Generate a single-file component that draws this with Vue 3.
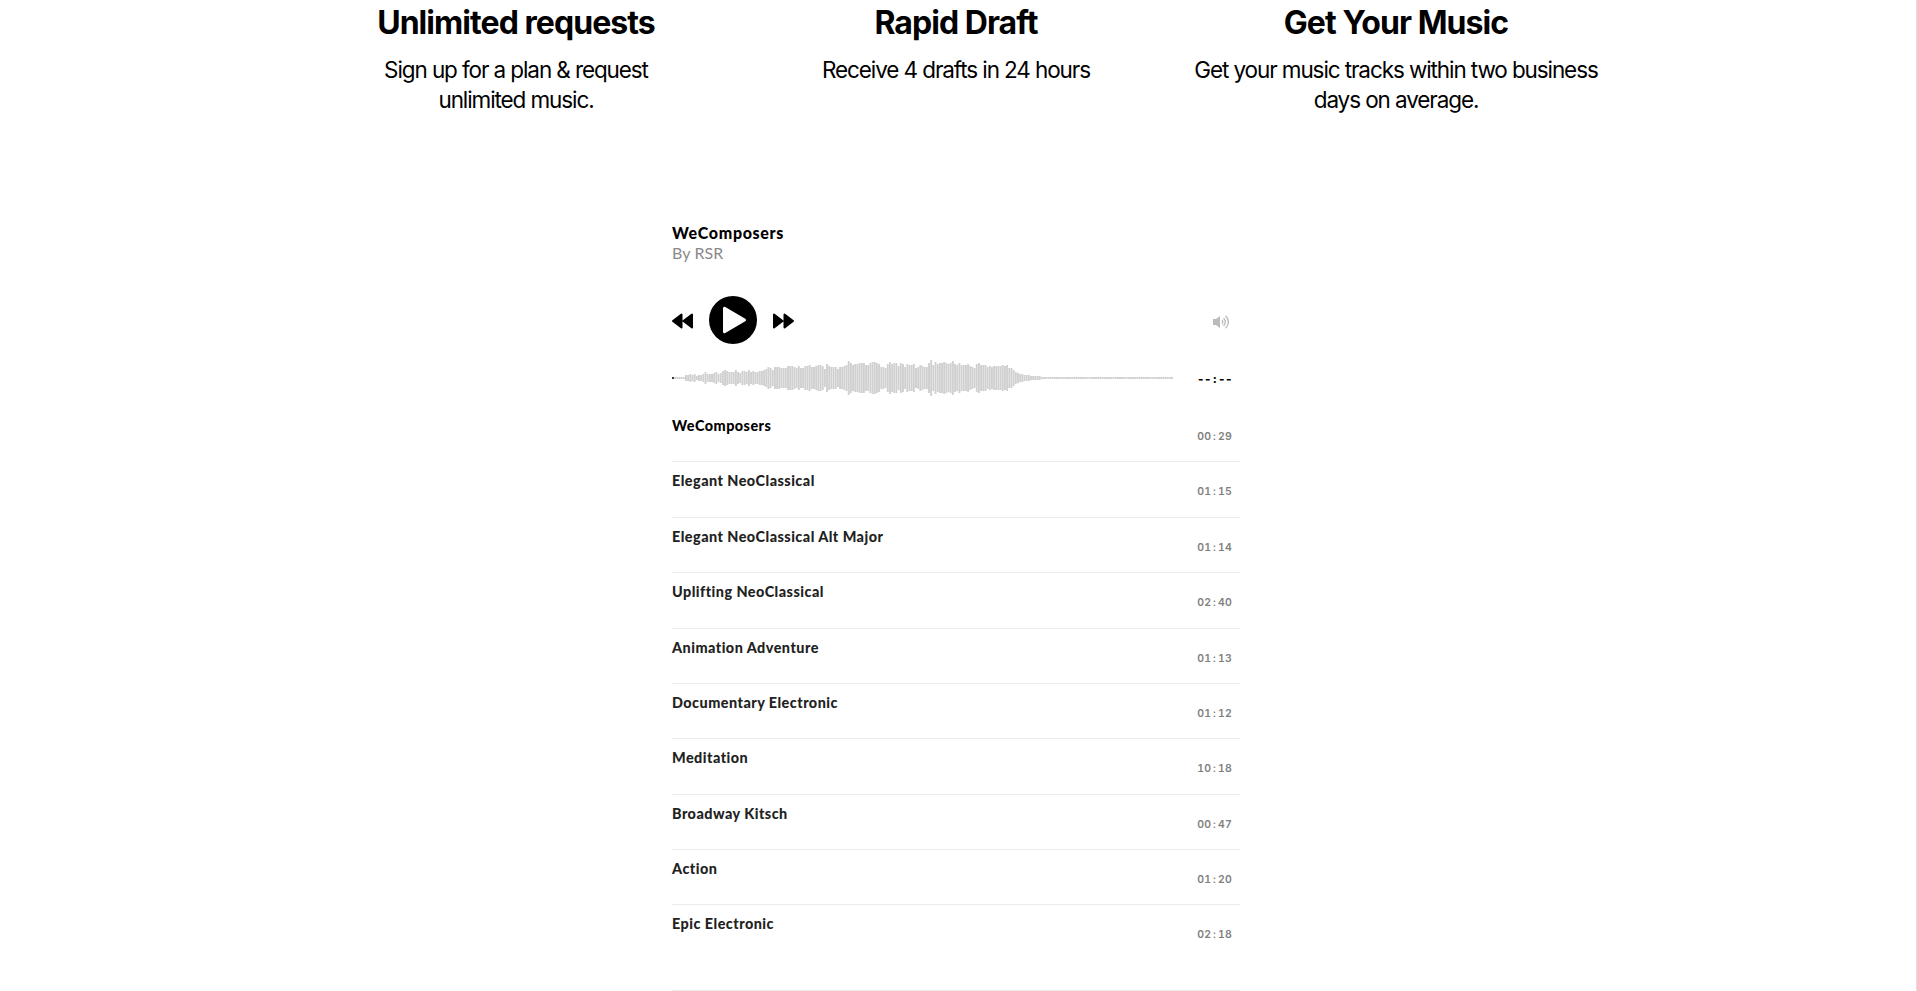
<script setup>
import { ref } from "vue";

const steps = ref([
    { title: 'Unlimited requests', text: 'Sign up for a plan & request\nunlimited music.' },
    { title: 'Rapid Draft', text: 'Receive 4 drafts in 24 hours' },
    { title: 'Get Your Music', text: 'Get your music tracks within two business\ndays on average.' },
]);

const tracks = ref([
    { name: 'WeComposers', min: '00', sec: '29' },
    { name: 'Elegant NeoClassical', min: '01', sec: '15' },
    { name: 'Elegant NeoClassical Alt Major', min: '01', sec: '14' },
    { name: 'Uplifting NeoClassical', min: '02', sec: '40' },
    { name: 'Animation Adventure', min: '01', sec: '13' },
    { name: 'Documentary Electronic', min: '01', sec: '12' },
    { name: 'Meditation', min: '10', sec: '18' },
    { name: 'Broadway Kitsch', min: '00', sec: '47' },
    { name: 'Action', min: '01', sec: '20' },
    { name: 'Epic Electronic', min: '02', sec: '18' },
]);
const current = ref(0);

// bar heights in px, the quiet tail is filled up with 2px bars
const peaks = [
    2, 2, 2, 2, 2, 2, 6, 6, 8, 6, 8, 4, 6, 6, 8, 12, 8, 8, 8, 10, 12, 8, 10, 14, 16, 14, 12, 12, 12, 16,
    12, 10, 14, 14, 12, 16, 12, 14, 12, 12, 14, 14, 16, 18, 22, 20, 16, 22, 22, 22, 20, 20, 20, 24, 24, 24, 22, 20, 24, 20,
    20, 24, 24, 26, 22, 22, 24, 26, 26, 24, 18, 28, 24, 22, 22, 22, 18, 22, 22, 24, 26, 34, 30, 26, 28, 28, 30, 30, 30, 26,
    26, 30, 32, 32, 30, 28, 22, 22, 20, 28, 32, 28, 30, 30, 24, 30, 28, 22, 28, 26, 26, 28, 20, 22, 26, 24, 22, 22, 30, 36,
    26, 32, 28, 30, 30, 32, 30, 28, 30, 34, 28, 26, 30, 26, 26, 26, 28, 24, 22, 20, 28, 30, 26, 26, 26, 22, 24, 22, 24, 24,
    24, 24, 26, 24, 26, 20, 20, 16, 12, 10, 8, 8, 6, 6, 6, 4, 4, 4, 4, 4,
];
const step = 2.17;
const bars = Array.from({ length: 231 }, (_, i) => peaks[i] || 2);
</script>

<template>
    <div class="page">
        <div class="steps">
            <div v-for="s in steps" class="step">
                <h2>{{ s.title }}</h2>
                <p>{{ s.text }}</p>
            </div>
        </div>

        <div class="player">
            <div class="album">WeComposers</div>
            <div class="artist">By RSR</div>

            <div class="controls">
                <svg class="skip" width="21" height="16" viewBox="0 0 21 16">
                    <path d="M1 8 9.5 1.5V14.5ZM11.5 8 20 1.5V14.5Z" />
                </svg>
                <svg class="play" width="48" height="48" viewBox="0 0 48 48">
                    <circle cx="24" cy="24" r="24" />
                    <path d="M15.5 12.2V35.8L35.5 24Z" />
                </svg>
                <svg class="skip" width="21" height="16" viewBox="0 0 21 16">
                    <path d="M20 8 11.5 1.5V14.5ZM9.5 8 1 1.5V14.5Z" />
                </svg>
                <svg class="volume" width="17" height="14" viewBox="0 0 17 14">
                    <path class="cone" d="M0 4H3L7 1V13L3 10H0Z" />
                    <path d="M9 5Q10.6 7 9 9M10.6 3Q14 7 10.6 11M12.6 .8Q18.2 7 12.6 13.2" />
                </svg>
            </div>

            <div class="timeline">
                <svg class="wave" width="503" height="40">
                    <rect v-for="(h, i) in bars" :key="i" :class="{ head: i === 0 }" :x="i * step" :y="20 - h / 2" width="1.9" :height="h" />
                </svg>
                <span class="time elapsed">--<i>:</i>--</span>
            </div>

            <ul>
                <li v-for="(t, i) in tracks" :class="{ active: i === current }">
                    <span class="name">{{ t.name }}</span>
                    <span class="time">{{ t.min }}<i>:</i>{{ t.sec }}</span>
                </li>
            </ul>
        </div>
    </div>
</template>

<style>
body {
    background-color: #fff;
    overflow: hidden;
}
</style>

<style scoped>
.page {
    box-sizing: border-box;
    height: 991px;
    overflow: hidden;
    border-right: 1px solid #dedede;
    font-family: Inter, "Liberation Sans", sans-serif;
    color: #000;
}
.steps {
    display: flex;
    justify-content: center;
    height: 222px;
    padding-right: 4px;
}
.step {
    width: 440px;
    text-align: center;
}
h2 {
    margin: 3px 0 0;
    font-size: 32px;
    line-height: 40px;
    font-weight: 700;
    letter-spacing: -0.94px;
}
p {
    margin: 12px 0 0;
    font-size: 22.5px;
    line-height: 30px;
    letter-spacing: -1.1px;
    white-space: pre-line;
}
.player {
    width: 568px;
    margin-left: 672px;
    font-family: Lato, sans-serif;
}
.album {
    font-size: 16px;
    line-height: 21px;
    font-weight: 900;
    letter-spacing: 0.66px;
}
.artist {
    font-size: 16px;
    line-height: 20px;
    letter-spacing: 0.1px;
    color: #8a8a8a;
}
.controls {
    display: flex;
    align-items: center;
    height: 48px;
    margin-top: 33px;
}
.skip {
    margin-top: 1px;
    fill: #000;
    stroke: #000;
    stroke-width: 2;
    stroke-linejoin: round;
}
.play {
    margin: 0 16px;
}
.play path {
    fill: #fff;
    stroke: #fff;
    stroke-width: 3;
    stroke-linejoin: round;
}
.volume {
    margin: 4px 10px 0 auto;
    fill: none;
    stroke: #bbb;
    stroke-width: 1.3;
}
.volume .cone {
    fill: #bbb;
    stroke: none;
}
.timeline {
    display: flex;
    justify-content: space-between;
    height: 40px;
    margin-top: 14px;
    padding-right: 8px;
}
.wave {
    fill: #d0d0d0;
}
.wave .head {
    fill: #333;
}
ul {
    list-style: none;
    margin: 9px 0 0;
    padding: 0;
}
li {
    box-sizing: border-box;
    display: flex;
    justify-content: space-between;
    height: 55.38px;
    padding-right: 8px;
    border-bottom: 1px solid #ebebeb;
    color: #222;
}
li:last-child {
    height: 85.8px;
}
.active {
    color: #000;
}
.name {
    padding-top: 10px;
    font-size: 14.4px;
    line-height: 18px;
    font-weight: 900;
    letter-spacing: 0.47px;
}
.time {
    padding-top: 23px;
    font-family: Inter, sans-serif;
    font-size: 10.5px;
    line-height: 14px;
    font-weight: 600;
    font-variant-numeric: tabular-nums;
    letter-spacing: 0.15px;
    color: #808080;
}
.time i {
    display: inline-block;
    width: 7px;
    font-style: normal;
    text-align: center;
}
.elapsed {
    padding-top: 14px;
    font-size: 11.6px;
    font-weight: 800;
    letter-spacing: -0.5px;
    color: #000;
}
</style>
